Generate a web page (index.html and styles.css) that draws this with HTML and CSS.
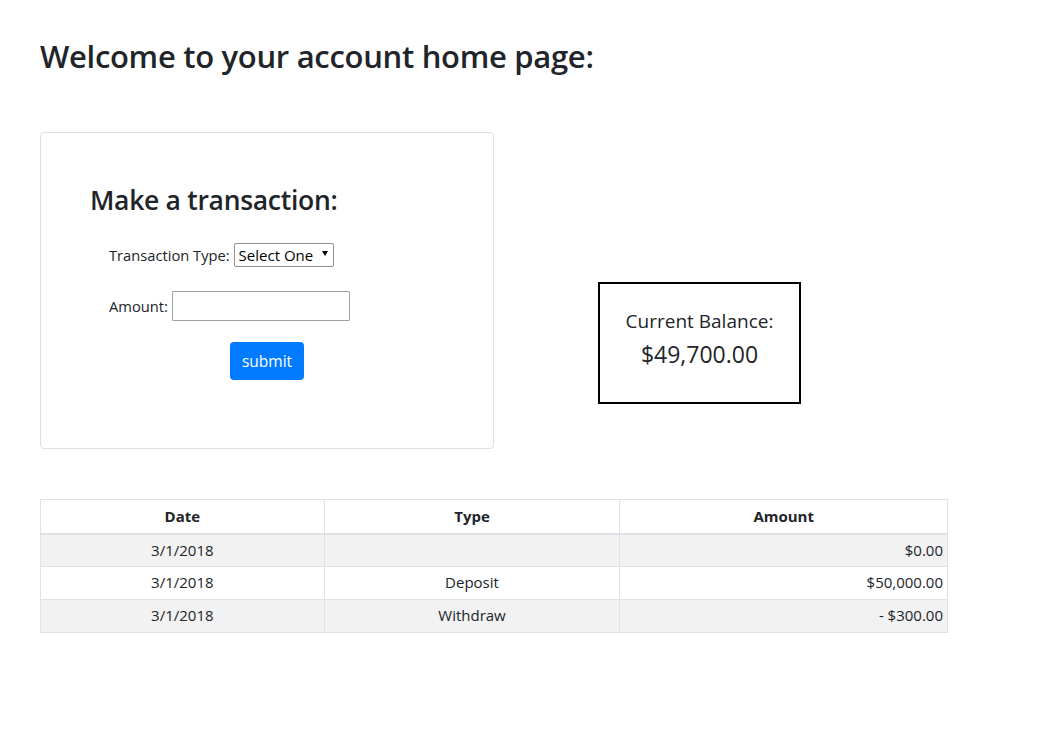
FILE: index.html
```html
<!DOCTYPE html>
<html lang="en">
<head>
<meta charset="utf-8">
<title>Account Home</title>
<link rel="stylesheet" href="styles.css">
</head>
<body>
<main class="page">
  <h1 class="page-title">Welcome to your account home page:</h1>
  <section class="top-row">
    <div class="card">
      <h3 class="card-title">Make a transaction:</h3>
      <form class="tx-form">
        <div class="form-row">
          <label class="form-label" for="type">Transaction Type:</label>
          <span class="select-wrap">
            <select id="type" class="select">
              <option>Select One</option>
              <option>Deposit</option>
              <option>Withdraw</option>
            </select>
          </span>
        </div>
        <div class="form-row row-amount">
          <label class="form-label" for="amount">Amount:</label>
          <input id="amount" class="text-input" type="text">
        </div>
        <div class="btn-row">
          <button type="button" class="btn">submit</button>
        </div>
      </form>
    </div>
    <div class="balance">
      <h5 class="balance-label">Current Balance:</h5>
      <h4 class="balance-value">$49,700.00</h4>
    </div>
  </section>
  <table class="tx-table">
    <thead>
      <tr>
        <th class="col-date">Date</th>
        <th class="col-type">Type</th>
        <th class="col-amount">Amount</th>
      </tr>
    </thead>
    <tbody>
      <tr class="striped">
        <td>3/1/2018</td>
        <td></td>
        <td class="amount">$0.00</td>
      </tr>
      <tr>
        <td>3/1/2018</td>
        <td>Deposit</td>
        <td class="amount">$50,000.00</td>
      </tr>
      <tr class="striped">
        <td>3/1/2018</td>
        <td>Withdraw</td>
        <td class="amount">- $300.00</td>
      </tr>
    </tbody>
  </table>
</main>
</body>
</html>
```

FILE: styles.css
```css
* { box-sizing: border-box; }
html, body { margin: 0; padding: 0; background: #fff; }
body {
  font-family: "Open Sans", "Noto Sans", sans-serif;
  font-size: 16px;
  color: #212529;
}
.page { padding: 0 40px; width: 987px; }
.page-title {
  font-size: 31px;
  font-weight: 600;
  line-height: 1.2;
  margin: 38px 0 0;
  letter-spacing: -0.3px;
}
.top-row {
  display: flex;
  align-items: flex-start;
  margin-top: 57px;
}
.card {
  width: 454px;
  height: 317px;
  border: 1px solid #dfdfdf;
  border-radius: 4px;
  padding: 52px 49px 0;
}
.card-title {
  font-size: 26.5px;
  font-weight: 600;
  line-height: 1.2;
  margin: 0;
  letter-spacing: -0.3px;
}
.tx-form { margin-top: 26px; padding-left: 19px; }
.form-row { display: flex; align-items: center; height: 24px; }
.row-amount { margin-top: 24px; height: 30px; }
.form-label { font-size: 14.7px; margin-right: 4px; }
.select-wrap { position: relative; display: inline-block; }
.select {
  appearance: none;
  -webkit-appearance: none;
  width: 100px;
  height: 24px;
  border: 1px solid #8f8f8f;
  border-radius: 2px;
  background: #fff;
  font-family: inherit;
  font-size: 15px;
  color: #000;
  padding: 0 0 0 4px;
  line-height: 22px;
}
.select-wrap::after {
  content: "";
  position: absolute;
  right: 6px;
  top: 8px;
  border-left: 3px solid transparent;
  border-right: 3px solid transparent;
  border-top: 5px solid #000;
  pointer-events: none;
}
.text-input {
  width: 178px;
  height: 30px;
  border: 1px solid #a0a0a0;
  border-radius: 1px;
  padding: 0 4px;
  font-family: inherit;
  font-size: 15px;
}
.btn-row { display: flex; justify-content: center; margin-top: 21px; padding-right: 19px; }
.btn {
  width: 74px;
  height: 38px;
  background: #007bff;
  color: #fff;
  border: 0;
  border-radius: 4px;
  font-family: inherit;
  font-size: 15.5px;
  padding: 0;
}
.balance {
  margin-left: 104px;
  margin-top: 150px;
  width: 203px;
  height: 122px;
  border: 2px solid #000;
  display: flex;
  flex-direction: column;
  align-items: center;
  padding-top: 26px;
}
.balance-label {
  font-size: 19px;
  font-weight: 500;
  line-height: 1.2;
  margin: 0;
}
.balance-value {
  font-size: 23px;
  font-weight: 500;
  line-height: 1.2;
  margin: 8px 0 0;
}
.tx-table {
  margin-top: 50px;
  width: 908px;
  border-collapse: collapse;
  font-size: 15px;
}
.tx-table th, .tx-table td {
  border: 1px solid #dee2e6;
  height: 33px;
  padding: 0 4px;
  text-align: center;
  line-height: 1.3;
}
.tx-table th { font-weight: 700; border-bottom-width: 2px; height: 34px; }
.col-date { width: 284px; }
.col-type { width: 296px; }
.col-amount { width: 328px; }
.tx-table td.amount { text-align: right; }
.striped td { background: #f2f2f2; }
```
